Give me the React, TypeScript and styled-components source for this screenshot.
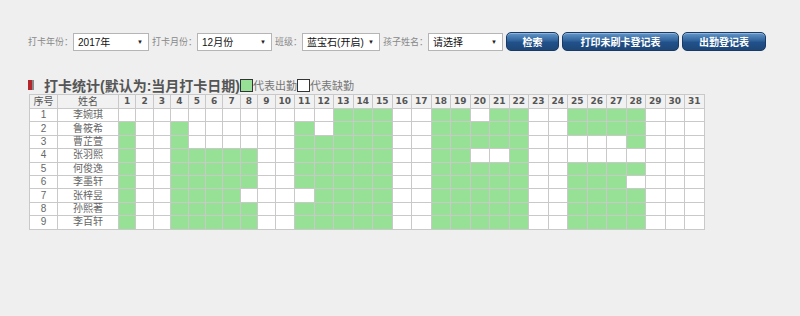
import React from 'react'
import styled, { createGlobalStyle } from 'styled-components'

const GlobalStyle = createGlobalStyle`
  body {
    margin: 0;
    background: #efefef;
    font-family: "Liberation Sans", "Noto Sans CJK SC", sans-serif;
  }
`

const Page = styled.div`
  width: 800px;
  height: 316px;
  padding-top: 32px;
  box-sizing: border-box;
`

const Toolbar = styled.div`
  display: flex;
  align-items: center;
  padding-left: 28px;
  height: 19px;
`

const Label = styled.span`
  font-size: 9px;
  color: #888;
  white-space: nowrap;
`

const SelectBox = styled.div<{ $w: number }>`
  width: ${p => p.$w}px;
  height: 18px;
  margin-right: 3px;
  box-sizing: border-box;
  background: #fff;
  border: 1px solid #b5b5b5;
  display: flex;
  align-items: center;
  justify-content: space-between;
  padding: 0 5px 0 4px;
  font-size: 10px;
  color: #111;
`

const Arrow = styled.span`
  font-size: 6px;
  color: #222;
`

const BlueButton = styled.button<{ $w: number }>`
  width: ${p => p.$w}px;
  height: 19px;
  margin-right: 3px;
  border: 1px solid #173a66;
  border-radius: 5px;
  background: linear-gradient(#6496c9, #31649b 45%, #22508a 55%, #1d4777);
  box-shadow: inset 0 1px 0 rgba(255, 255, 255, 0.3);
  color: #fff;
  font-family: "Liberation Sans", "Noto Sans CJK SC", sans-serif;
  font-size: 10px;
  font-weight: bold;
  padding: 0;
`

const TitleRow = styled.div`
  display: flex;
  align-items: center;
  margin-top: 26px;
  padding-left: 28px;
  height: 16px;
`

const Marker = styled.span`
  width: 4px;
  height: 10px;
  background: #b3262c;
  border-right: 2px solid #8a8a8a;
  margin-right: 2px;
  box-shadow: 3px 0 0 #efefef;
`

const Title = styled.span`
  margin-left: 8px;
  font-size: 14px;
  font-weight: bold;
  color: #555;
  white-space: nowrap;
`

const LegendBox = styled.span<{ $on?: boolean }>`
  width: 11px;
  height: 11px;
  border: 1px solid #333;
  background: ${p => (p.$on ? '#97e197' : '#fff')};
`

const LegendText = styled.span`
  font-size: 11px;
  color: #777;
  white-space: nowrap;
`

const Grid = styled.div`
  display: grid;
  grid-template-columns: 27px 60px repeat(9, 16.4px) repeat(22, 18.5px);
  grid-template-rows: 13px repeat(9, 12.4px);
  gap: 1px;
  width: fit-content;
  margin: 1px 0 0 29px;
  padding: 1px;
  background: #c9c9c9;
`

const HeadCell = styled.div<{ $num?: boolean }>`
  background: #f1f1f1;
  display: flex;
  align-items: center;
  justify-content: center;
  color: #555;
  font-size: ${p => (p.$num ? 9 : 10)}px;
  font-weight: ${p => (p.$num ? 'bold' : 'normal')};
  font-family: ${p => (p.$num ? '"DejaVu Sans", sans-serif' : 'inherit')};
  line-height: 1;
`

const TextCell = styled.div`
  background: #fff;
  display: flex;
  align-items: center;
  justify-content: center;
  color: #666;
  font-size: 10px;
  line-height: 1;
`

const DayCell = styled.div<{ $on: boolean }>`
  background: ${p => (p.$on ? '#97e197' : '#fff')};
`

const range = (a: number, b: number) => Array.from({ length: b - a + 1 }, (_, i) => a + i)

const rows = [
  { name: '李婉琪', on: [13, 14, 15, 18, 19, 21, 22, 25, 26, 27, 28] },
  { name: '鲁筱希', on: [1, 4, 11, ...range(13, 15), ...range(18, 22), ...range(25, 28)] },
  { name: '曹芷萱', on: [1, 4, ...range(11, 15), ...range(18, 22), 28] },
  { name: '张羽熙', on: [1, ...range(4, 8), ...range(11, 15), 18, 19, 22] },
  { name: '何俊逸', on: [1, ...range(4, 8), ...range(11, 15), ...range(18, 22), ...range(25, 28)] },
  { name: '李墨轩', on: [1, ...range(4, 8), ...range(11, 15), ...range(18, 22), ...range(25, 27)] },
  { name: '张梓昱', on: [1, ...range(4, 7), ...range(12, 15), ...range(18, 22), ...range(25, 28)] },
  { name: '孙熙著', on: [1, ...range(4, 8), ...range(11, 15), ...range(18, 22), ...range(25, 28)] },
  { name: '李百轩', on: [1, ...range(4, 8), ...range(11, 15), ...range(18, 22), ...range(25, 28)] },
]

const days = range(1, 31)

export default function App() {
  return (
    <Page>
      <GlobalStyle />
      <Toolbar>
        <Label>打卡年份：</Label>
        <SelectBox $w={76}>2017年<Arrow>▼</Arrow></SelectBox>
        <Label>打卡月份：</Label>
        <SelectBox $w={75}>12月份<Arrow>▼</Arrow></SelectBox>
        <Label>班级：</Label>
        <SelectBox $w={78}>蓝宝石(开启)<Arrow>▼</Arrow></SelectBox>
        <Label>孩子姓名：</Label>
        <SelectBox $w={75}>请选择<Arrow>▼</Arrow></SelectBox>
        <BlueButton $w={53}>检索</BlueButton>
        <BlueButton $w={117}>打印未刷卡登记表</BlueButton>
        <BlueButton $w={84}>出勤登记表</BlueButton>
      </Toolbar>

      <TitleRow>
        <Marker />
        <Title>打卡统计(默认为:当月打卡日期)</Title>
        <LegendBox $on />
        <LegendText>代表出勤</LegendText>
        <LegendBox />
        <LegendText>代表缺勤</LegendText>
      </TitleRow>

      <Grid>
        <HeadCell>序号</HeadCell>
        <HeadCell>姓名</HeadCell>
        {days.map(d => (
          <HeadCell key={d} $num>{d}</HeadCell>
        ))}
        {rows.map((r, i) => (
          <React.Fragment key={r.name}>
            <TextCell>{i + 1}</TextCell>
            <TextCell>{r.name}</TextCell>
            {days.map(d => (
              <DayCell key={d} $on={r.on.includes(d)} />
            ))}
          </React.Fragment>
        ))}
      </Grid>
    </Page>
  )
}
